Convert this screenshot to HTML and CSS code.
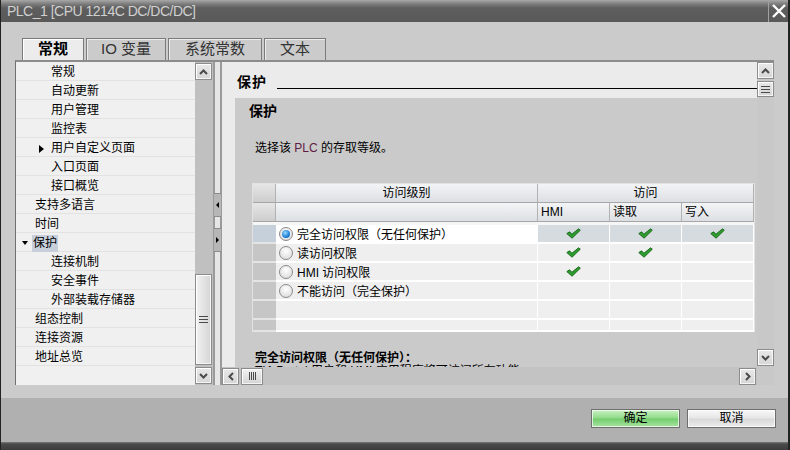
FILE: index.html
```html
<!DOCTYPE html>
<html>
<head>
<meta charset="utf-8">
<link rel="stylesheet" href="styles.css">
</head>
<body>
<div class="window">
  <div class="titlebar">
    <div class="title">PLC_1 [CPU 1214C DC/DC/DC]</div>
    <div class="close"><svg width="14" height="14" viewBox="0 0 14 14"><path d="M1 1 L13 13 M13 1 L1 13" stroke="#fff" stroke-width="2.4"/></svg></div>
  </div>
  <div class="main">
    <div class="tabs">
      <div class="tab active w62">常规</div>
      <div class="tab w80">IO 变量</div>
      <div class="tab w94">系统常数</div>
      <div class="tab w62">文本</div>
    </div>
    <div class="panel">
      <div class="tree">
        <div class="row l2">常规</div>
        <div class="row l2">自动更新</div>
        <div class="row l2">用户管理</div>
        <div class="row l2">监控表</div>
        <div class="row l2"><span class="tri-r"></span>用户自定义页面</div>
        <div class="row l2">入口页面</div>
        <div class="row l2">接口概览</div>
        <div class="row l1">支持多语言</div>
        <div class="row l1">时间</div>
        <div class="row l1"><span class="tri-d"></span><span class="hl">保护</span></div>
        <div class="row l2">连接机制</div>
        <div class="row l2">安全事件</div>
        <div class="row l2">外部装载存储器</div>
        <div class="row l1">组态控制</div>
        <div class="row l1">连接资源</div>
        <div class="row l1">地址总览</div>
      </div>
      <div class="vs-left">
        <div class="sbtn"><svg width="9" height="6" viewBox="0 0 9 6"><path d="M1 5 L4.5 1.5 L8 5" fill="none" stroke="#4a4a4a" stroke-width="2"/></svg></div>
        <div class="vtrack">
          <div class="vthumb"><svg width="9" height="7" viewBox="0 0 9 7"><path d="M0 0.5H9M0 3.5H9M0 6.5H9" stroke="#4a4a4a"/></svg></div>
        </div>
        <div class="sbtn"><svg width="9" height="6" viewBox="0 0 9 6"><path d="M1 1 L4.5 4.5 L8 1" fill="none" stroke="#4a4a4a" stroke-width="2"/></svg></div>
      </div>
      <div class="splitter">
        <div class="split-btn"><span class="stri-l"></span></div>
        <div class="split-btn"><span class="stri-r"></span></div>
      </div>
      <div class="right">
        <div class="content">
          <div class="hdr">
            <div class="hdr-title">保护</div>
            <div class="hdr-line"></div>
          </div>
          <div class="section">
            <div class="sec-title">保护</div>
            <div class="sec-text">选择该 <span class="plc">PLC</span> 的存取等级。</div>
            <div class="grid">
              <div class="c-rhh"></div>
              <div class="c-h center">访问级别</div>
              <div class="c-h center span3">访问</div>

              <div class="c-rhh"></div>
              <div class="c-h"></div>
              <div class="c-h">HMI</div>
              <div class="c-h">读取</div>
              <div class="c-h">写入</div>

              <div class="c-sep"></div>

              <div class="c-rh sel"></div>
              <div class="c-lv sel"><span class="radio on"></span>完全访问权限（无任何保护）</div>
              <div class="c-ck sel"><svg width="15" height="11" viewBox="0 0 15 11"><path d="M0.8 5.6 L3.6 3.8 L5.9 6.2 L12.6 0.8 L14.3 2.2 L6.1 10.2 Z" fill="#2c9d2c" stroke="#16621a" stroke-width="0.9" stroke-linejoin="round"/></svg></div>
              <div class="c-ck sel"><svg width="15" height="11" viewBox="0 0 15 11"><path d="M0.8 5.6 L3.6 3.8 L5.9 6.2 L12.6 0.8 L14.3 2.2 L6.1 10.2 Z" fill="#2c9d2c" stroke="#16621a" stroke-width="0.9" stroke-linejoin="round"/></svg></div>
              <div class="c-ck sel"><svg width="15" height="11" viewBox="0 0 15 11"><path d="M0.8 5.6 L3.6 3.8 L5.9 6.2 L12.6 0.8 L14.3 2.2 L6.1 10.2 Z" fill="#2c9d2c" stroke="#16621a" stroke-width="0.9" stroke-linejoin="round"/></svg></div>

              <div class="c-rh"></div>
              <div class="c-lv"><span class="radio"></span>读访问权限</div>
              <div class="c-ck"><svg width="15" height="11" viewBox="0 0 15 11"><path d="M0.8 5.6 L3.6 3.8 L5.9 6.2 L12.6 0.8 L14.3 2.2 L6.1 10.2 Z" fill="#2c9d2c" stroke="#16621a" stroke-width="0.9" stroke-linejoin="round"/></svg></div>
              <div class="c-ck"><svg width="15" height="11" viewBox="0 0 15 11"><path d="M0.8 5.6 L3.6 3.8 L5.9 6.2 L12.6 0.8 L14.3 2.2 L6.1 10.2 Z" fill="#2c9d2c" stroke="#16621a" stroke-width="0.9" stroke-linejoin="round"/></svg></div>
              <div class="c-ck"></div>

              <div class="c-rh"></div>
              <div class="c-lv"><span class="radio"></span>HMI 访问权限</div>
              <div class="c-ck"><svg width="15" height="11" viewBox="0 0 15 11"><path d="M0.8 5.6 L3.6 3.8 L5.9 6.2 L12.6 0.8 L14.3 2.2 L6.1 10.2 Z" fill="#2c9d2c" stroke="#16621a" stroke-width="0.9" stroke-linejoin="round"/></svg></div>
              <div class="c-ck"></div>
              <div class="c-ck"></div>

              <div class="c-rh"></div>
              <div class="c-lv"><span class="radio"></span>不能访问（完全保护）</div>
              <div class="c-ck"></div>
              <div class="c-ck"></div>
              <div class="c-ck"></div>

              <div class="c-rh"></div>
              <div class="c-lv"></div>
              <div class="c-ck"></div>
              <div class="c-ck"></div>
              <div class="c-ck"></div>

              <div class="c-rh"></div>
              <div class="c-lv"></div>
              <div class="c-ck"></div>
              <div class="c-ck"></div>
              <div class="c-ck"></div>
            </div>
            <div class="sec-cap">完全访问权限（无任何保护）：</div>
            <div class="sec-desc">TIA Portal 用户和 HMI 应用程序将可访问所有功能。</div>
          </div>
        </div>
        <div class="vs-right">
          <div class="sbtn"><svg width="9" height="6" viewBox="0 0 9 6"><path d="M1 5 L4.5 1.5 L8 5" fill="none" stroke="#4a4a4a" stroke-width="2"/></svg></div>
          <div class="sbtn thumb-top"><svg width="9" height="7" viewBox="0 0 9 7"><path d="M0 0.5H9M0 3.5H9M0 6.5H9" stroke="#4a4a4a"/></svg></div>
          <div class="vspace"></div>
          <div class="sbtn"><svg width="9" height="6" viewBox="0 0 9 6"><path d="M1 1 L4.5 4.5 L8 1" fill="none" stroke="#4a4a4a" stroke-width="2"/></svg></div>
        </div>
        <div class="hscroll">
          <div class="sbtn"><svg width="6" height="9" viewBox="0 0 6 9"><path d="M5 1 L1.5 4.5 L5 8" fill="none" stroke="#4a4a4a" stroke-width="2"/></svg></div>
          <div class="sbtn hthumb"><svg width="7" height="8" viewBox="0 0 7 8"><path d="M0.5 0V8M2.5 0V8M4.5 0V8M6.5 0V8" stroke="#4a4a4a"/></svg></div>
          <div class="hspace"></div>
          <div class="sbtn"><svg width="6" height="9" viewBox="0 0 6 9"><path d="M1 1 L4.5 4.5 L1 8" fill="none" stroke="#4a4a4a" stroke-width="2"/></svg></div>
        </div>
        <div class="corner"></div>
      </div>
    </div>
  </div>
  <div class="footer">
    <div class="btn ok">确定</div>
    <div class="btn cancel">取消</div>
  </div>
  <div class="bottom-bar"></div>
</div>
</body>
</html>
```

FILE: styles.css
```css
* { box-sizing: border-box; margin: 0; padding: 0; }
html, body { width: 790px; height: 450px; overflow: hidden; }
body {
  font-family: "Liberation Sans", "Noto Sans CJK SC", sans-serif;
  font-size: 12px;
  color: #000;
  background: #cbcbcb;
}
.window {
  width: 790px;
  height: 450px;
  display: flex;
  flex-direction: column;
  background: #cbcbcb;
  border-left: 1px solid #222;
  border-right: 2px solid #222;
}
.titlebar {
  height: 22px;
  flex: none;
  display: flex;
  background: linear-gradient(#a8a8a8 0px, #7c7c7c 4px, #5e5e5e 8px, #595959 100%);
}
.title {
  flex: 1;
  color: #d0d0d0;
  font-size: 14px;
  letter-spacing: -0.5px;
  padding: 2px 0 0 6px;
  line-height: 18px;
  white-space: nowrap;
}
.close {
  width: 20px;
  border-left: 1px solid #a0a0a0;
  display: flex;
  align-items: center;
  justify-content: center;
}
.main {
  height: 376px;
  flex: none;
  padding: 16px 0 0 14px;
}
.tabs {
  display: flex;
  gap: 2px;
  padding-left: 7px;
  height: 22px;
}
.tab {
  height: 22px;
  border: 1px solid #7a7a7a;
  border-bottom: none;
  box-shadow: inset 1px 1px 0 #ececec;
  background: #cbcbcb;
  color: #333;
  font-family: "Liberation Sans", "Noto Sans CJK SC", sans-serif;
  font-size: 15px;
  line-height: 20px;
  text-align: center;
}
.tab.active {
  background: #ececec;
  box-shadow: inset 1px 1px 0 #fff;
  color: #000;
  font-weight: bold;
}
.w62 { width: 62px; }
.w80 { width: 80px; }
.w94 { width: 94px; }
.panel {
  width: 759px;
  height: 325px;
  display: flex;
  border-top: 2px solid #8c8c8c;
  border-left: 1px solid #707070;
}
.tree {
  width: 179px;
  background: #f0f0f0;
}
.row {
  height: 19px;
  border-bottom: 1px solid #e2e2e2;
  padding-top: 2px;
  line-height: 16px;
  white-space: nowrap;
}
.l1 { padding-left: 19px; }
.l2 { padding-left: 35px; }
.tri-r {
  display: inline-block;
  width: 0;
  height: 0;
  border-left: 5px solid #000;
  border-top: 4px solid transparent;
  border-bottom: 4px solid transparent;
  margin-left: -12px;
  margin-right: 7px;
  vertical-align: -1px;
}
.tri-d {
  display: inline-block;
  width: 0;
  height: 0;
  border-top: 4px solid #000;
  border-left: 3.5px solid transparent;
  border-right: 3.5px solid transparent;
  margin-left: -13px;
  margin-right: 6px;
  vertical-align: 2px;
}
.hl {
  display: inline-block;
  background: #c6cfda;
  line-height: 17px;
  padding: 0 1px;
  margin-left: -2px;
  margin-top: -1px;
}
.vs-left {
  width: 18px;
  background: #c0c0c0;
  display: flex;
  flex-direction: column;
  padding: 1px 1px 1px 0;
}
.sbtn {
  width: 17px;
  height: 17px;
  flex: none;
  border: 1px solid #8c8c8c;
  box-shadow: inset 1px 1px 0 #fff, inset -1px -1px 0 #f4f4f4;
  background: linear-gradient(#e8e8e8, #d6d6d6);
  display: flex;
  align-items: center;
  justify-content: center;
}
.vtrack {
  flex: 1;
  display: flex;
  flex-direction: column;
  justify-content: flex-end;
  padding-bottom: 2px;
}
.vthumb {
  height: 91px;
  border: 1px solid #8c8c8c;
  box-shadow: inset 1px 1px 0 #fff, inset -1px -1px 0 #f4f4f4;
  background: linear-gradient(90deg, #f2f2f2, #d4d4d4);
  display: flex;
  align-items: center;
  justify-content: center;
}
.splitter {
  width: 9px;
  background: #e6e6e6;
  border-left: 2px solid #9a9a9a;
  border-right: 2px solid #9a9a9a;
  display: flex;
  flex-direction: column;
  gap: 11px;
  padding-top: 131px;
}
.split-btn {
  width: 7px;
  height: 24px;
  margin-left: -1px;
  background: #b6b6b6;
  border-top: 1px solid #8c8c8c;
  border-bottom: 1px solid #8c8c8c;
  display: flex;
  align-items: center;
  justify-content: center;
}
.stri-l {
  width: 0; height: 0;
  border-right: 3px solid #000;
  border-top: 3px solid transparent;
  border-bottom: 3px solid transparent;
}
.stri-r {
  width: 0; height: 0;
  border-left: 3px solid #000;
  border-top: 3px solid transparent;
  border-bottom: 3px solid transparent;
}
.right {
  width: 552px;
  display: grid;
  grid-template-columns: 535px 17px;
  grid-template-rows: 305px 18px;
}
.content {
  background: #ebebeb;
  overflow: hidden;
  display: flex;
  flex-direction: column;
}
.hdr {
  height: 36px;
  flex: none;
  display: flex;
  align-items: flex-end;
  padding: 0 0 9px 15px;
}
.hdr-title {
  font-size: 14px;
  font-weight: bold;
  line-height: 14px;
  letter-spacing: 1px;
}
.hdr-line {
  flex: 1;
  margin-left: 10px;
  border-bottom: 1px solid #000;
}
.section {
  flex: 1;
  margin-left: 13px;
  background: #cacaca;
  overflow: hidden;
}
.sec-title {
  font-size: 14px;
  font-weight: bold;
  line-height: 16px;
  margin-top: 5px;
  padding-left: 14px;
}
.sec-text {
  line-height: 16px;
  margin-top: 21px;
  padding-left: 20px;
}
.plc { color: #5e1c40; }
.grid {
  margin: 27px 0 0 17px;
  width: 503px;
  border: 1px solid #e2e2e2;
  border-bottom: none;
  display: grid;
  grid-template-columns: 23px 262px 72px 72px 72px;
  grid-template-rows: 19px 19px 3px repeat(5, 19px) 12px;
}
.c-h {
  background: linear-gradient(#f3f4f6, #dcdfe3);
  border-right: 1px solid #b2b2b2;
  border-bottom: 1px solid #a6a6a6;
  line-height: 18px;
  padding-left: 3px;
  white-space: nowrap;
}
.c-h.center { text-align: center; padding-left: 0; }
.span3 { grid-column: span 3; }
.c-rhh {
  background: linear-gradient(#e6e6e6, #cdcdcd);
  border-right: 1px solid #b2b2b2;
  border-bottom: 1px solid #a6a6a6;
}
.c-sep {
  grid-column: span 5;
  background: #f6f6f6;
}
.c-rh {
  background: #c6c6c6;
  border-bottom: 2px solid #e4e4e4;
}
.c-rh.sel { background: #c5d0db; }
.c-lv {
  background: #efefef;
  border-bottom: 2px solid #fff;
  border-right: 1px solid #fff;
  display: flex;
  align-items: center;
  padding-left: 3px;
  white-space: nowrap;
}
.c-lv.sel { background: #fff; }
.c-ck {
  background: #efefef;
  border-bottom: 2px solid #fff;
  border-right: 1px solid #fff;
  display: flex;
  align-items: center;
  justify-content: center;
}
.c-ck.sel { background: #d6dbe0; }
.radio {
  width: 14px;
  height: 14px;
  flex: none;
  border-radius: 50%;
  border: 1px solid #8a8a8a;
  background: radial-gradient(circle at 50% 35%, #ffffff, #d6d6d6);
  margin-right: 4px;
  display: flex;
  align-items: center;
  justify-content: center;
}
.radio.on::after {
  content: "";
  width: 8px;
  height: 8px;
  border-radius: 50%;
  background: radial-gradient(circle at 40% 35%, #9cd8ff, #2486dc 55%, #0b4f9a);
}
.sec-cap {
  font-weight: bold;
  line-height: 16px;
  margin-top: 18px;
  padding-left: 20px;
}
.sec-desc {
  line-height: 14px;
  margin-top: -2px;
  padding-left: 20px;
  white-space: nowrap;
}
.vs-right {
  background: #c8c8c8;
  display: flex;
  flex-direction: column;
  padding-bottom: 1px;
}
.thumb-top { margin-top: 2px; height: 16px; }
.vspace { flex: 1; }
.hscroll {
  background: #c3c3c3;
  display: flex;
  align-items: center;
  padding-right: 1px;
}
.hthumb {
  width: 22px;
  margin-left: 2px;
  background: linear-gradient(#f2f2f2, #d4d4d4);
}
.hspace { flex: 1; }
.corner { background: #c8c8c8; }
.footer {
  height: 44px;
  flex: none;
  background: #b0b0b0;
  display: flex;
  justify-content: flex-end;
  gap: 7px;
  padding: 11px 12px 0 0;
}
.btn {
  width: 89px;
  height: 19px;
  border: 1px solid #6e6e6e;
  box-shadow: inset 0 0 0 1px rgba(255, 255, 255, 0.7);
  font-size: 12px;
  line-height: 17px;
  text-align: center;
}
.ok { background: linear-gradient(#c9f1c2, #90db89 48%, #72cd6c 52%, #a9e4a2); }
.cancel { background: linear-gradient(#f8f8f8, #e6e6e6 48%, #d8d8d8 52%, #ececec); }
.bottom-bar {
  height: 8px;
  flex: none;
  background: linear-gradient(#7a7a7a, #4a4a4a 2px, #3c3c3c);
}
```
